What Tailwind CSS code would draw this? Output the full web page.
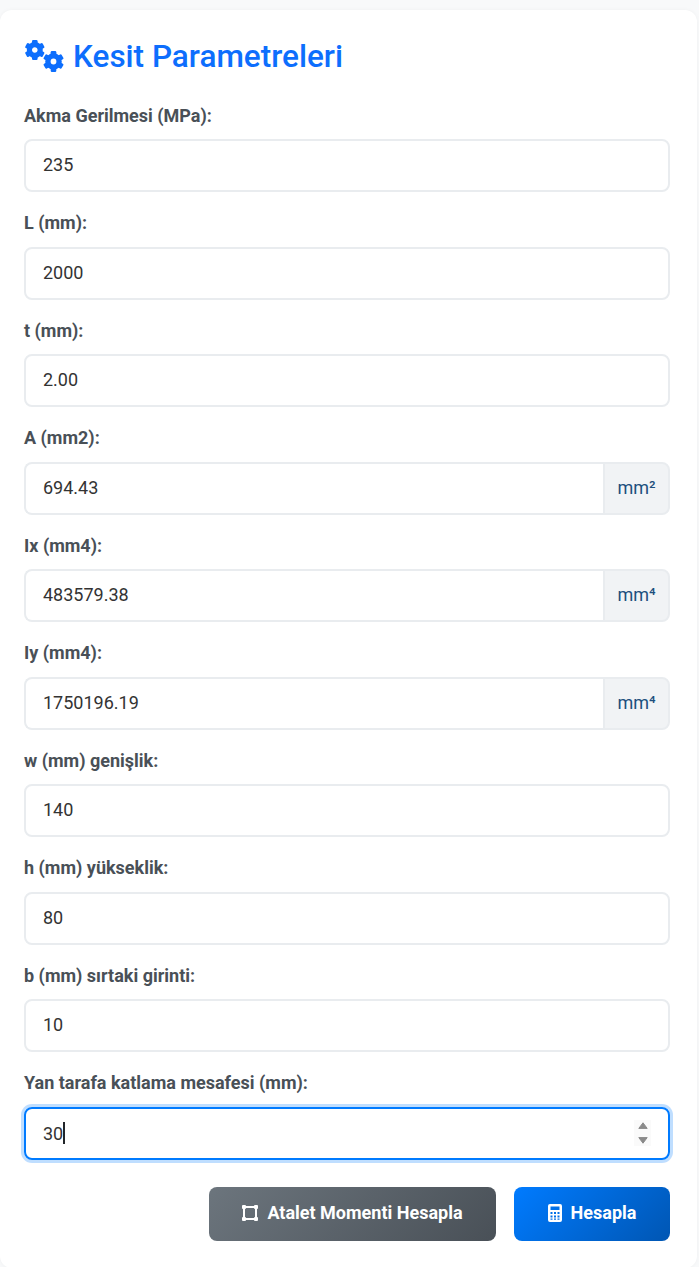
<!DOCTYPE html>
<html lang="tr">
<head>
<meta charset="utf-8">
<script src="https://cdn.jsdelivr.net/npm/@tailwindcss/browser@4"></script>
</head>
<body class="bg-[#f8f9fa] font-['Roboto',sans-serif] text-[#333333] overflow-hidden">
<div class="pt-[10px] pr-[2px] h-[1267px]">
<form class="bg-white rounded-[12px] pt-[24px] pl-[24px] pr-[27px] pb-[27px] shadow-[0_0_4px_rgba(0,0,0,0.04)]">
<h2 class="flex items-center gap-[8px] text-[#0d6efd] text-[31.5px] leading-[44px] font-medium mb-[26.5px]">
<svg class="w-[41px] h-[32px] shrink-0" viewBox="0 0 41 32" fill="currentColor">
<g transform="translate(10.8 10)">
<circle r="5.4" fill="none" stroke="currentColor" stroke-width="5.2"/>
<rect x="-2.8" y="-10" width="5.6" height="4.5" rx="1.2"/>
<rect x="-2.8" y="-10" width="5.6" height="4.5" rx="1.2" transform="rotate(60)"/>
<rect x="-2.8" y="-10" width="5.6" height="4.5" rx="1.2" transform="rotate(120)"/>
<rect x="-2.8" y="-10" width="5.6" height="4.5" rx="1.2" transform="rotate(180)"/>
<rect x="-2.8" y="-10" width="5.6" height="4.5" rx="1.2" transform="rotate(240)"/>
<rect x="-2.8" y="-10" width="5.6" height="4.5" rx="1.2" transform="rotate(300)"/>
</g>
<g transform="translate(29.5 21.5)">
<circle r="5.6" fill="none" stroke="currentColor" stroke-width="5.4"/>
<rect x="-2.8" y="-10.4" width="5.6" height="4.9" rx="1.2"/>
<rect x="-2.8" y="-10.4" width="5.6" height="4.9" rx="1.2" transform="rotate(60)"/>
<rect x="-2.8" y="-10.4" width="5.6" height="4.9" rx="1.2" transform="rotate(120)"/>
<rect x="-2.8" y="-10.4" width="5.6" height="4.9" rx="1.2" transform="rotate(180)"/>
<rect x="-2.8" y="-10.4" width="5.6" height="4.9" rx="1.2" transform="rotate(240)"/>
<rect x="-2.8" y="-10.4" width="5.6" height="4.9" rx="1.2" transform="rotate(300)"/>
</g>
</svg>
<span class="translate-y-[1px]">Kesit Parametreleri</span>
</h2>

<div class="mb-[20px]"><label class="block text-[18px] leading-[22.5px] font-bold text-[#495057] mb-[12px]">Akma Gerilmesi (MPa):</label>
<input class="block w-full h-[53px] border-2 border-[#e9ecef] rounded-[8px] pl-[17px] pr-[16px] pb-[2px] text-[18px] outline-none" value="235"></div>

<div class="mb-[20px]"><label class="block text-[18px] leading-[22.5px] font-bold text-[#495057] mb-[12px]">L (mm):</label>
<input class="block w-full h-[53px] border-2 border-[#e9ecef] rounded-[8px] pl-[17px] pr-[16px] pb-[2px] text-[18px] outline-none" value="2000"></div>

<div class="mb-[20px]"><label class="block text-[18px] leading-[22.5px] font-bold text-[#495057] mb-[12px]">t (mm):</label>
<input class="block w-full h-[53px] border-2 border-[#e9ecef] rounded-[8px] pl-[17px] pr-[16px] pb-[2px] text-[18px] outline-none" value="2.00"></div>

<div class="mb-[20px]"><label class="block text-[18px] leading-[22.5px] font-bold text-[#495057] mb-[12px]">A (mm2):</label>
<div class="flex"><input class="block min-w-0 flex-1 h-[53px] border-2 border-r-0 border-[#e9ecef] rounded-l-[8px] pl-[17px] pr-[16px] pb-[2px] text-[18px] outline-none" value="694.43"><span class="flex items-center justify-center w-[67px] h-[53px] pb-[2px] bg-[#f1f3f5] border-2 border-[#e9ecef] rounded-r-[8px] text-[18px] text-[#1d4f7d]">mm²</span></div></div>

<div class="mb-[20px]"><label class="block text-[18px] leading-[22.5px] font-bold text-[#495057] mb-[12px]">Ix (mm4):</label>
<div class="flex"><input class="block min-w-0 flex-1 h-[53px] border-2 border-r-0 border-[#e9ecef] rounded-l-[8px] pl-[17px] pr-[16px] pb-[2px] text-[18px] outline-none" value="483579.38"><span class="flex items-center justify-center w-[67px] h-[53px] pb-[2px] bg-[#f1f3f5] border-2 border-[#e9ecef] rounded-r-[8px] text-[18px] text-[#1d4f7d]">mm⁴</span></div></div>

<div class="mb-[20px]"><label class="block text-[18px] leading-[22.5px] font-bold text-[#495057] mb-[12px]">Iy (mm4):</label>
<div class="flex"><input class="block min-w-0 flex-1 h-[53px] border-2 border-r-0 border-[#e9ecef] rounded-l-[8px] pl-[17px] pr-[16px] pb-[2px] text-[18px] outline-none" value="1750196.19"><span class="flex items-center justify-center w-[67px] h-[53px] pb-[2px] bg-[#f1f3f5] border-2 border-[#e9ecef] rounded-r-[8px] text-[18px] text-[#1d4f7d]">mm⁴</span></div></div>

<div class="mb-[20px]"><label class="block text-[18px] leading-[22.5px] font-bold text-[#495057] mb-[12px]">w (mm) genişlik:</label>
<input class="block w-full h-[53px] border-2 border-[#e9ecef] rounded-[8px] pl-[17px] pr-[16px] pb-[2px] text-[18px] outline-none" value="140"></div>

<div class="mb-[20px]"><label class="block text-[18px] leading-[22.5px] font-bold text-[#495057] mb-[12px]">h (mm) yükseklik:</label>
<input class="block w-full h-[53px] border-2 border-[#e9ecef] rounded-[8px] pl-[17px] pr-[16px] pb-[2px] text-[18px] outline-none" value="80"></div>

<div class="mb-[20px]"><label class="block text-[18px] leading-[22.5px] font-bold text-[#495057] mb-[12px]">b (mm) sırtaki girinti:</label>
<input class="block w-full h-[53px] border-2 border-[#e9ecef] rounded-[8px] pl-[17px] pr-[16px] pb-[2px] text-[18px] outline-none" value="10"></div>

<div class="mb-[27.5px]"><label class="block text-[18px] leading-[22.5px] font-bold text-[#495057] mb-[12px]">Yan tarafa katlama mesafesi (mm):</label>
<div class="relative h-[53px] border-2 border-[#007bff] rounded-[8px] pl-[17px] flex items-center text-[18px] shadow-[0_0_0_3px_rgba(0,123,255,0.25)]">
<span>30</span><span class="w-[2px] h-[22px] bg-[#212529]"></span>
<span class="absolute right-[17px] top-[11px] flex flex-col items-center justify-center gap-[8px] w-[17px] h-[26px] bg-[#fafafa]">
<svg class="w-[10px] h-[7px]" viewBox="0 0 10 7" fill="#8a8a8a" stroke="#8a8a8a" stroke-linejoin="round"><path d="M5 .8l4.2 5.6H.8z"/></svg>
<svg class="w-[10px] h-[7px]" viewBox="0 0 10 7" fill="#8a8a8a" stroke="#8a8a8a" stroke-linejoin="round"><path d="M5 6.2L.8.6h8.4z"/></svg>
</span></div></div>

<div class="flex justify-end gap-[18px]">
<button type="button" class="flex items-center justify-center gap-[9px] w-[287px] h-[54px] pb-[3px] rounded-[8px] text-white text-[18px] font-bold bg-[linear-gradient(135deg,#6c757d,#495057)]">
<svg class="w-[16px] h-[16px]" viewBox="0 0 16 16" fill="none" stroke="currentColor"><path stroke-width="2" d="M3 2h10M3 14h10M2 3v10M14 3v10"/><g fill="currentColor" stroke="none"><rect x="0" y="0" width="4" height="4" rx="1"/><rect x="12" y="0" width="4" height="4" rx="1"/><rect x="0" y="12" width="4" height="4" rx="1"/><rect x="12" y="12" width="4" height="4" rx="1"/></g></svg>
Atalet Momenti Hesapla</button>
<button type="button" class="flex items-center justify-center gap-[9px] w-[156px] h-[54px] pb-[3px] rounded-[8px] text-white text-[18px] font-bold bg-[linear-gradient(135deg,#007bff,#0056b3)]">
<svg class="w-[14px] h-[18px]" viewBox="0 0 14 18"><path fill="currentColor" fill-rule="evenodd" d="M2 0h10a2 2 0 0 1 2 2v14a2 2 0 0 1-2 2H2a2 2 0 0 1-2-2V2a2 2 0 0 1 2-2zM2.5 2.5v3.5h9V2.5zM2.5 8v2h2V8zM6 8v2h2V8zM9.5 8v2h2V8zM2.5 11.5v2h2v-2zM6 11.5v2h2v-2zM9.5 11.5v2h2v-2zM2.5 14.5v1.2h2v-1.2zM6 14.5v1.2h2v-1.2zM9.5 14.5v1.2h2v-1.2z"/></svg>
Hesapla</button>
</div>
</form>
</div>
</body>
</html>
